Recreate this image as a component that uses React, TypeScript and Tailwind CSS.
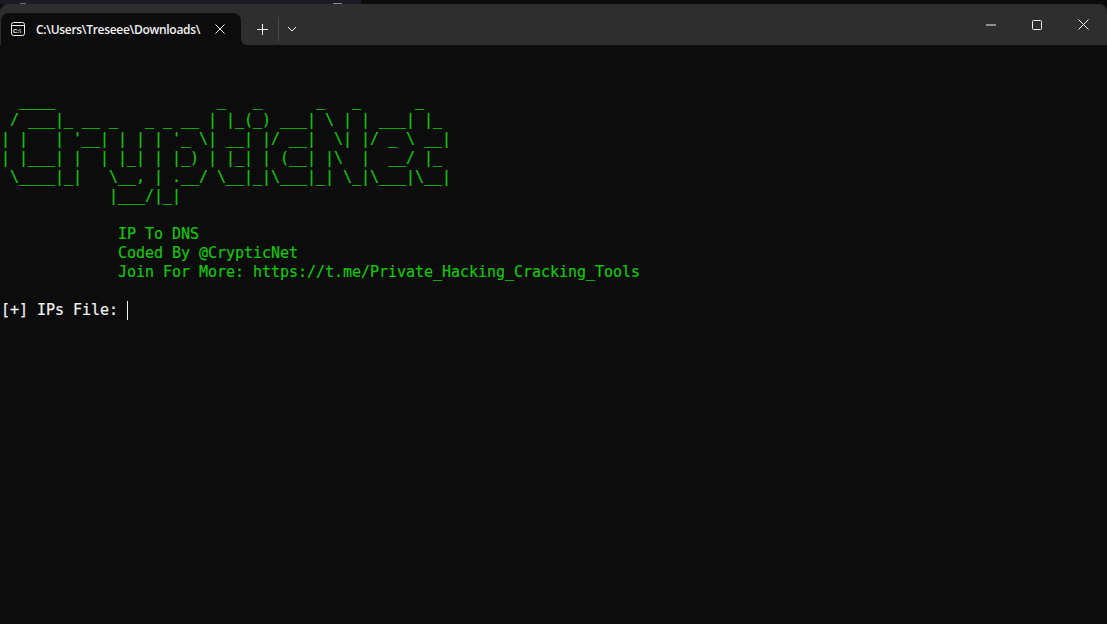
const mono = "font-['DejaVu_Sans_Mono','Liberation_Mono',monospace]";

const banner = `

  ____                  _   _      _   _      _
 / ___|_ __ _   _ _ __ | |_(_) ___| \\ | | ___| |_
| |   | '__| | | | '_ \\| __| |/ __|  \\| |/ _ \\ __|
| |___| |  | |_| | |_) | |_| | (__| |\\  |  __/ |_
 \\____|_|   \\__, | .__/ \\__|_|\\___|_| \\_|\\___|\\__|
            |___/|_|

             IP To DNS
             Coded By @CrypticNet
             Join For More: https://t.me/Private_Hacking_Cracking_Tools

`;

function TabIcon() {
  return (
    <svg width="14" height="14" viewBox="0 0 14 14" fill="none" className="text-[#f2f2f2] shrink-0">
      <rect x="0.5" y="0.5" width="13" height="13" rx="2" stroke="currentColor" />
      <path d="M1 3.5h12" stroke="currentColor" />
      <text x="2" y="10.5" fontSize="6" fontWeight="700" fill="currentColor" fontFamily="Liberation Sans">C:\</text>
    </svg>
  );
}

function TitleBar() {
  return (
    <div className="flex h-[41px] bg-[#2e2e2e] rounded-t-lg text-[#f2f2f2]">
      <div className="relative flex items-center w-[240px] h-[32px] ml-px mt-[9px] bg-[#0c0c0c] rounded-t-lg pl-[10px]">
        <TabIcon />
        <span className="ml-[11px] w-[165px] pt-px overflow-hidden whitespace-nowrap text-[12px] font-semibold tracking-[-0.3px] font-['Open_Sans',sans-serif]">
          C:\Users\Treseee\Downloads\
        </span>
        <svg width="10" height="10" viewBox="0 0 10 10" className="ml-[14px]" stroke="currentColor" fill="none">
          <path d="M0.5 0.5l9 9M9.5 0.5l-9 9" />
        </svg>
        <div className="absolute left-full bottom-0 w-[6px] h-[6px] bg-[#0c0c0c]">
          <div className="w-full h-full bg-[#2e2e2e] rounded-bl-[6px]" />
        </div>
      </div>
      <div className="flex items-center h-[32px] mt-[9px] ml-[16px]">
        <svg width="11" height="11" viewBox="0 0 11 11" stroke="currentColor" fill="none">
          <path d="M5.5 0v11M0 5.5h11" />
        </svg>
        <div className="w-px h-[24px] bg-[#4a4a4a] ml-[10px]" />
        <svg width="10" height="6" viewBox="0 0 10 6" stroke="currentColor" fill="none" className="ml-[8px]">
          <path d="M1 1l4 4 4-4" />
        </svg>
      </div>
      <div className="flex items-center h-[41px] ml-auto pr-[18px] gap-[36px]">
        <svg width="10" height="2" viewBox="0 0 10 2" stroke="currentColor" fill="none">
          <path d="M0 1h10" />
        </svg>
        <svg width="10" height="10" viewBox="0 0 10 10" stroke="currentColor" fill="none">
          <rect x="0.5" y="0.5" width="9" height="9" rx="1" />
        </svg>
        <svg width="11" height="11" viewBox="0 0 11 11" stroke="currentColor" fill="none">
          <path d="M0.5 0.5l10 10M10.5 0.5l-10 10" />
        </svg>
      </div>
    </div>
  );
}

export default function App() {
  return (
    <div className="w-[1107px] h-[624px] overflow-hidden bg-[#0c0c0e] flex flex-col">
      <div className="relative h-[4px] w-[361px] bg-[#1c1c22]">
        <div className="absolute left-[20px] bottom-0 w-[6px] h-px bg-[#6b6b6b]" />
        <div className="absolute left-[333px] bottom-0 w-[9px] h-px bg-[#8a8a8a]" />
      </div>
      <TitleBar />
      <div className={`flex-1 bg-[#0c0c0c] pt-[9px] pl-px text-[15px] leading-[19px] tracking-[-0.03px] [-webkit-text-stroke:0.2px] ${mono}`}>
        <pre className={`${mono} text-[#16c60c]`}>{banner}</pre>
        <div className="text-[#f2f2f2] flex whitespace-pre">
          [+] IPs File: <span className="w-px h-[19px] bg-[#f2f2f2]" />
        </div>
      </div>
    </div>
  );
}
